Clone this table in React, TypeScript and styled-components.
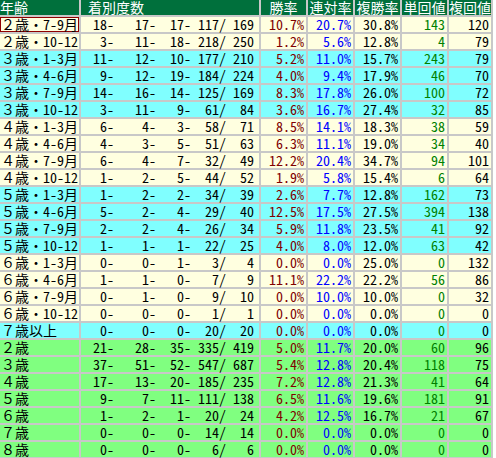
import React from "react";
import styled, { createGlobalStyle } from "styled-components";

const Global = createGlobalStyle`
  html, body { margin: 0; padding: 0; background: #ffffff; }
`;

type Tone = "y" | "c" | "g";

const toneBg: Record<Tone, string> = {
  y: "#ffffe0",
  c: "#80ffff",
  g: "#80ff80",
};

const Table = styled.table`
  border-collapse: separate;
  border-spacing: 2px;
  background: #c8c8c8;
  margin: -2px 0 0 -2px;
  table-layout: fixed;
  font-family: "Noto Sans Mono CJK JP", "Noto Sans CJK JP", "DejaVu Sans Mono", monospace;
  font-size: 14px;
`;

const HeadCell = styled.th<{ $align?: string; $w: number }>`
  width: ${(p) => p.$w}px;
  height: 15px;
  padding: 0;
  background: #00703c;
  color: #ffffff;
  font-weight: normal;
  text-align: ${(p) => p.$align || "center"};
  line-height: 15px;
  white-space: pre;
`;

const Row = styled.tr<{ $tone: Tone }>`
  background: ${(p) => toneBg[p.$tone]};
`;

const LabelCell = styled.td<{ $mark?: boolean }>`
  height: 15px;
  padding: 0 0 0 1px;
  line-height: 15px;
  text-align: left;
  white-space: pre;
  color: #000000;
  box-shadow: ${(p) => (p.$mark ? "inset 0 0 0 1px #900000" : "none")};
`;

const NumCell = styled.td<{ $color?: string; $pr?: number }>`
  height: 15px;
  padding: 0 ${(p) => p.$pr ?? 2}px 0 0;
  line-height: 15px;
  text-align: right;
  white-space: pre;
  color: ${(p) => p.$color || "#000000"};
`;

type R = [string, number[], string, string, string, string, string, Tone];

const rows: R[] = [
  ["２歳・7-9月", [18, 17, 17, 117, 169], "10.7%", "20.7%", "30.8%", "143", "120", "y"],
  ["２歳・10-12", [3, 11, 18, 218, 250], "1.2%", "5.6%", "12.8%", "4", "79", "y"],
  ["３歳・1-3月", [11, 12, 10, 177, 210], "5.2%", "11.0%", "15.7%", "243", "79", "c"],
  ["３歳・4-6月", [9, 12, 19, 184, 224], "4.0%", "9.4%", "17.9%", "46", "70", "c"],
  ["３歳・7-9月", [14, 16, 14, 125, 169], "8.3%", "17.8%", "26.0%", "100", "72", "c"],
  ["３歳・10-12", [3, 11, 9, 61, 84], "3.6%", "16.7%", "27.4%", "32", "85", "c"],
  ["４歳・1-3月", [6, 4, 3, 58, 71], "8.5%", "14.1%", "18.3%", "38", "59", "y"],
  ["４歳・4-6月", [4, 3, 5, 51, 63], "6.3%", "11.1%", "19.0%", "34", "40", "y"],
  ["４歳・7-9月", [6, 4, 7, 32, 49], "12.2%", "20.4%", "34.7%", "94", "101", "y"],
  ["４歳・10-12", [1, 2, 5, 44, 52], "1.9%", "5.8%", "15.4%", "6", "64", "y"],
  ["５歳・1-3月", [1, 2, 2, 34, 39], "2.6%", "7.7%", "12.8%", "162", "73", "c"],
  ["５歳・4-6月", [5, 2, 4, 29, 40], "12.5%", "17.5%", "27.5%", "394", "138", "c"],
  ["５歳・7-9月", [2, 2, 4, 26, 34], "5.9%", "11.8%", "23.5%", "41", "92", "c"],
  ["５歳・10-12", [1, 1, 1, 22, 25], "4.0%", "8.0%", "12.0%", "63", "42", "c"],
  ["６歳・1-3月", [0, 0, 1, 3, 4], "0.0%", "0.0%", "25.0%", "0", "132", "y"],
  ["６歳・4-6月", [1, 1, 0, 7, 9], "11.1%", "22.2%", "22.2%", "56", "86", "y"],
  ["６歳・7-9月", [0, 1, 0, 9, 10], "0.0%", "10.0%", "10.0%", "0", "32", "y"],
  ["６歳・10-12", [0, 0, 0, 1, 1], "0.0%", "0.0%", "0.0%", "0", "0", "y"],
  ["７歳以上", [0, 0, 0, 20, 20], "0.0%", "0.0%", "0.0%", "0", "0", "c"],
  ["２歳", [21, 28, 35, 335, 419], "5.0%", "11.7%", "20.0%", "60", "96", "g"],
  ["３歳", [37, 51, 52, 547, 687], "5.4%", "12.8%", "20.4%", "118", "75", "g"],
  ["４歳", [17, 13, 20, 185, 235], "7.2%", "12.8%", "21.3%", "41", "64", "g"],
  ["５歳", [9, 7, 11, 111, 138], "6.5%", "11.6%", "19.6%", "181", "91", "g"],
  ["６歳", [1, 2, 1, 20, 24], "4.2%", "12.5%", "16.7%", "21", "67", "g"],
  ["７歳", [0, 0, 0, 14, 14], "0.0%", "0.0%", "0.0%", "0", "0", "g"],
  ["８歳", [0, 0, 0, 6, 6], "0.0%", "0.0%", "0.0%", "0", "0", "g"],
];

const pad = (n: number, w: number) => String(n).padStart(w, " ");
const record = (v: number[]) =>
  `${pad(v[0], 3)}-${pad(v[1], 5)}-${pad(v[2], 4)}-${pad(v[3], 4)}/${pad(v[4], 4)}`;

export default function App() {
  return (
    <>
      <Global />
      <Table>
        <thead>
          <tr>
            <HeadCell $w={79} $align="left">年齢</HeadCell>
            <HeadCell $w={178} $align="left">{" 着別度数"}</HeadCell>
            <HeadCell $w={45}>勝率</HeadCell>
            <HeadCell $w={45}>連対率</HeadCell>
            <HeadCell $w={45}>複勝率</HeadCell>
            <HeadCell $w={45}>単回値</HeadCell>
            <HeadCell $w={42}>複回値</HeadCell>
          </tr>
        </thead>
        <tbody>
          {rows.map((r, i) => (
            <Row key={i} $tone={r[7]}>
              <LabelCell $mark={i === 0}>{r[0]}</LabelCell>
              <NumCell $pr={5}>{record(r[1])}</NumCell>
              <NumCell $color="#800000">{r[2]}</NumCell>
              <NumCell $color="#0000ff">{r[3]}</NumCell>
              <NumCell>{r[4]}</NumCell>
              <NumCell $color="#008000">{r[5]}</NumCell>
              <NumCell>{r[6]}</NumCell>
            </Row>
          ))}
        </tbody>
      </Table>
    </>
  );
}
